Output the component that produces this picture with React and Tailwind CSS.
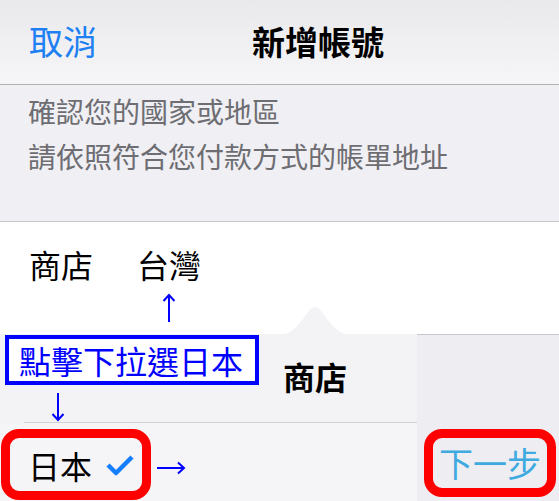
import React from "react";

const F = { fontFamily: '"Noto Sans CJK TC", "Noto Sans CJK SC", sans-serif' };

function UpArrow({ className }) {
  return (
    <svg className={className} width="14" height="30" viewBox="0 0 14 30">
      <path d="M7 2 V29 M1.5 8 L7 2 L12.5 8" stroke="#0000ff" strokeWidth="2" fill="none" />
    </svg>
  );
}
function DownArrow({ className }) {
  return (
    <svg className={className} width="14" height="30" viewBox="0 0 14 30">
      <path d="M7 1 V28 M1.5 22 L7 28 L12.5 22" stroke="#0000ff" strokeWidth="2" fill="none" />
    </svg>
  );
}
function RightArrow({ className }) {
  return (
    <svg className={className} width="30" height="14" viewBox="0 0 30 14">
      <path d="M1 7 H28 M22 1.5 L28 7 L22 12.5" stroke="#0000ff" strokeWidth="2" fill="none" />
    </svg>
  );
}

export default function App() {
  return (
    <div className="relative w-[559px] h-[501px] overflow-hidden bg-white" style={F}>
      {/* header */}
      <div className="h-[85px] border-b border-[#b2b2b2] bg-gradient-to-b from-[#e9e9ec] to-[#f6f6f8] flex items-center pl-[29px] pb-[2px]">
        <span className="text-[34px] leading-none text-[#1e80f2]">取消</span>
        <span className="ml-[155px] text-[33px] leading-none font-bold text-black">新增帳號</span>
      </div>
      {/* info */}
      <div className="h-[137px] bg-[#efeff4] border-b border-[#c8c7cc] pl-[28px] pt-[4px] text-[28px] leading-[45px] text-[#6d6d72]">
        <div>確認您的國家或地區</div>
        <div>請依照符合您付款方式的帳單地址</div>
      </div>
      {/* store row */}
      <div className="h-[112px] bg-white flex items-start pl-[29px] pt-[25px] text-[32px] leading-[34px] text-black">
        <span>商店</span>
        <span className="ml-[44px]">台灣</span>
      </div>
      {/* bottom */}
      <div className="flex h-[167px]">
        <div className="w-[417px] bg-[#f3f3f6] flex flex-col">
          <div className="h-[89px] ml-[24px] border-b border-[#d3d3da] flex items-center pl-[259px] pb-[4px]">
            <span className="text-[32px] leading-none font-bold text-black">商店</span>
          </div>
          <div className="flex items-start pt-[6px] pl-[1px] bg-[#f5f5f8] flex-1">
            <div className="w-[150px] h-[71px] border-[9px] border-[#ff0000] rounded-[18px] flex items-center pl-[18px]">
              <span className="text-[32px] leading-none text-black">日本</span>
              <svg className="ml-[14px]" width="28" height="22" viewBox="0 0 28 22">
                <path d="M2 11 L10 19 L26 3" stroke="#147efb" strokeWidth="4.5" fill="none" strokeLinejoin="round" />
              </svg>
            </div>
            <RightArrow className="ml-[5px] mt-[32px]" />
          </div>
        </div>
        <div className="flex-1 bg-[#ededf2] border-t border-[#c8c7cc] pl-[7px] pt-[94px]">
          <div className="w-[132px] h-[68px] border-[9px] border-[#ff0000] rounded-[18px] flex items-center justify-center">
            <span className="text-[34px] leading-none text-[#3eaadf]">下一步</span>
          </div>
        </div>
      </div>

      {/* popover arrow */}
      <svg className="absolute left-[278px] top-[306px]" width="74" height="30" viewBox="0 0 74 30">
        <path d="M0 29 C22 29 28 1 37 1 C46 1 52 29 74 29 Z" fill="#f3f3f6" />
      </svg>

      {/* annotations */}
      <UpArrow className="absolute left-[162px] top-[293px]" />
      <div className="absolute left-[5px] top-[335px] w-[254px] h-[50px] border-[4px] border-[#0000ff] bg-white flex items-center pl-[10px]">
        <span className="text-[32px] leading-none text-[#0000ff]">點擊下拉選日本</span>
      </div>
      <DownArrow className="absolute left-[51px] top-[392px]" />
    </div>
  );
}
